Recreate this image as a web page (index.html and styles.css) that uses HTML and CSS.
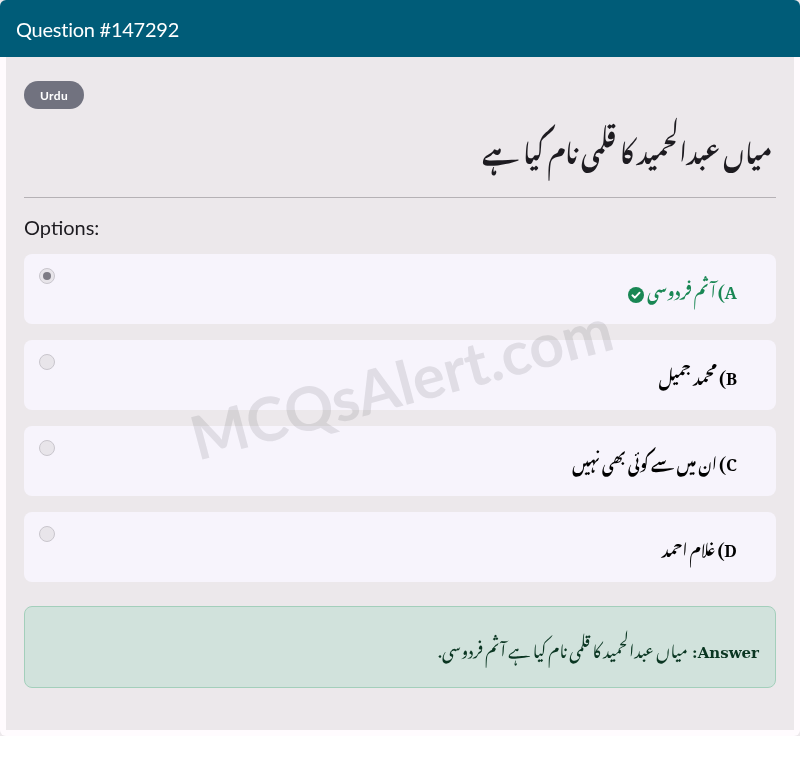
FILE: index.html
```html
<!DOCTYPE html>
<html lang="en">
<head>
<meta charset="utf-8">
<title>Question #147292</title>
<link rel="stylesheet" href="styles.css">
</head>
<body>
<div class="frame">
  <main class="card">
    <header class="card-header">Question #147292</header>
    <section class="card-body">
      <div class="badge-row"><span class="badge">Urdu</span></div>
      <h1 class="question urdu" dir="rtl">میاں عبدالحمید کا قلمی نام کیا ہے</h1>
      <hr class="rule">
      <h2 class="options-title">Options:</h2>
      <div class="options">
        <label class="option">
          <span class="radio radio-on"></span>
          <span class="option-text correct urdu" dir="rtl"><b class="option-key">A)</b> آثم فردوسی <svg class="check" viewBox="0 0 16 16" aria-hidden="true"><circle cx="8" cy="8" r="8" fill="#198754"/><path d="M4.4 8.3l2.5 2.4 4.7-5" fill="none" stroke="#fff" stroke-width="1.9" stroke-linecap="round" stroke-linejoin="round"/></svg></span>
        </label>
        <label class="option">
          <span class="radio"></span>
          <span class="option-text urdu" dir="rtl"><b class="option-key">B)</b> محمد جمیل</span>
        </label>
        <label class="option">
          <span class="radio"></span>
          <span class="option-text urdu" dir="rtl"><b class="option-key">C)</b> ان میں سے کوئی بھی نہیں</span>
        </label>
        <label class="option">
          <span class="radio"></span>
          <span class="option-text urdu" dir="rtl"><b class="option-key">D)</b> غلام احمد</span>
        </label>
      </div>
      <div class="answer urdu" dir="rtl"><b class="answer-label">Answer:</b> میاں عبدالحمید کا قلمی نام کیا ہے آثم فردوسی.</div>
    </section>
    <div class="watermark">MCQsAlert.com</div>
  </main>
</div>
</body>
</html>
```
FILE: styles.css
```css
* { box-sizing: border-box; }
html, body { margin: 0; padding: 0; background: #fff; }
body { font-family: "Lato", "Noto Sans", sans-serif; color: #1d1b20; }
.frame { background: #ece8eb; height: 736px; }
.card {
  position: relative;
  height: 736px;
  background: #fffbfe;
  border-radius: 6px;
  padding: 0 6px 6px;
  overflow: hidden;
  will-change: transform;
}
.card-header {
  margin: 0 -6px;
  height: 57px;
  background: #005c78;
  color: #fff;
  font-size: 20px;
  line-height: 58px;
  padding: 0 16px;
  letter-spacing: -.25px;
}
.card-body { background: #ece8eb; height: 673px; padding: 24px 18px 0; }
.badge-row { height: 28px; display: flex; }
.badge {
  width: 60px; height: 28px; border-radius: 14px;
  background: #71727f; color: #fff;
  font-size: 12px; font-weight: 700; letter-spacing: .4px;
  display: flex; align-items: center; justify-content: center;
}
.urdu { font-family: "Noto Nastaliq Urdu", "Noto Serif", "DejaVu Serif", serif; }
.question { margin: 0; height: 88px; padding-right: 4px; font-size: 24.5px; font-weight: 700; line-height: 78px; text-align: right; }
.rule { margin: 0; border: 0; border-top: 1px solid #b5b1b5; }
.options-title { margin: 0; height: 56px; font-size: 20px; font-weight: 400; line-height: 58px; }
.options { display: flex; flex-direction: column; gap: 16px; }
.option {
  display: flex; justify-content: space-between;
  height: 70px; padding: 14px 39px 0 15px;
  background: #f7f4fc; border-radius: 8px;
}
.radio { width: 16px; height: 16px; border-radius: 50%; background: #e8e5ea; border: 1px solid #c9c6cd; flex: none; position: relative; }
.radio-on { display: flex; align-items: center; justify-content: center; }
.radio-on::after { content: ""; width: 8px; height: 8px; border-radius: 50%; background: #7d7b84; }
.option-text { font-size: 15.5px; font-weight: 700; line-height: 50px; margin-top: -4px; color: #000; }
.option-key { font-size: 16.5px; }
.correct { color: #198754; }
.check { width: 16px; height: 16px; vertical-align: middle; margin-right: 1px; }
.answer {
  margin-top: 24px; height: 82px; padding: 0 16px;
  background: #d1e2dc; border: 1px solid #a3cfbb; border-radius: 8px;
  color: #0a3622; font-size: 16.5px; line-height: 82px;
}
.answer-label { font-family: "DejaVu Serif", serif; font-size: 15px; margin-left: 2px; }
.watermark {
  position: absolute; left: 401px; top: 382px;
  transform: translate(-50%, -50%) rotate(-15deg);
  font-size: 60.5px; font-weight: 700; color: rgba(70, 70, 80, .13);
  white-space: nowrap; pointer-events: none;
}
```
